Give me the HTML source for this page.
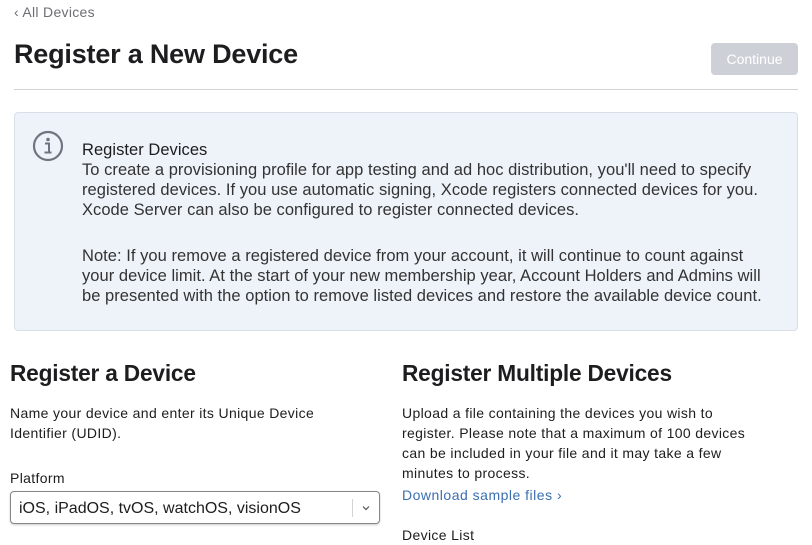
<!DOCTYPE html>
<html><head><meta charset="utf-8"><style>
*{margin:0;padding:0;box-sizing:border-box}
body{width:812px;height:545px;overflow:hidden;background:#fff;font-family:"Liberation Sans",sans-serif;color:#1d1d1f;position:relative}
.a{position:absolute;white-space:nowrap}
.back{left:14px;top:4px;font-size:14px;color:#6e6e73;letter-spacing:0.3px}
h1{position:absolute;left:14px;top:39px;font-size:27px;font-weight:bold;letter-spacing:-0.2px}
.btn{position:absolute;left:711px;top:43px;width:87px;height:32px;background:#cdd1d7;border-radius:4px;color:#fff;font-size:14px;text-align:center;line-height:32px}
.hr{position:absolute;left:14px;top:89px;width:784px;height:1px;background:#d2d2d7}
.box{position:absolute;left:14px;top:112px;width:784px;height:219px;background:#eef3fa;border:1px solid #d9dfe8;border-radius:4px}
.info{position:absolute;left:82px;top:140px;font-size:16.5px;line-height:20px;letter-spacing:0.04px;color:#333;white-space:nowrap}
h2{position:absolute;font-size:22.7px;font-weight:bold;top:360px;letter-spacing:-0.2px}
.p{position:absolute;font-size:14px;line-height:20px;letter-spacing:0.35px;color:#1d1d1f;white-space:nowrap}
.sel{position:absolute;left:10px;top:491px;width:370px;height:33px;border:1px solid #86868b;border-radius:4px;box-shadow:0 1px 2px rgba(0,0,0,.2);font-size:16px;line-height:33px;padding-left:8px}
</style></head><body>
<div class="a back">‹ All Devices</div>
<h1>Register a New Device</h1>
<div class="btn">Continue</div>
<div class="hr"></div>
<div class="box"></div>
<svg class="a" style="left:32px;top:130px" width="32" height="32" viewBox="0 0 32 32"><circle cx="16" cy="16" r="14" fill="none" stroke="#6e7480" stroke-width="2.2"/><circle cx="16" cy="9.5" r="1.8" fill="#6e7480"/><path d="M13 13.5h4v9M12.5 22.5h7" fill="none" stroke="#6e7480" stroke-width="2"/></svg>
<div class="info"><div style="color:#1d1d1f">Register Devices</div>To create a provisioning profile for app testing and ad hoc distribution, you'll need to specify<br>registered devices. If you use automatic signing, Xcode registers connected devices for you.<br>Xcode Server can also be configured to register connected devices.<br><br><div style="margin-top:6px">Note: If you remove a registered device from your account, it will continue to count against<br>your device limit. At the start of your new membership year, Account Holders and Admins will<br>be presented with the option to remove listed devices and restore the available device count.</div></div>
<h2 style="left:10px">Register a Device</h2>
<h2 style="left:402px">Register Multiple Devices</h2>
<div class="p" style="left:10px;top:403px">Name your device and enter its Unique Device<br>Identifier (UDID).</div>
<div class="p" style="left:10px;top:468px">Platform</div>
<div class="sel">iOS, iPadOS, tvOS, watchOS, visionOS<span style="position:absolute;left:341px;top:7px;height:18px;width:1px;background:#d2d2d7"></span><svg style="position:absolute;left:351px;top:13px" width="8" height="6" viewBox="0 0 8 6"><path d="M1 1.5l3 3 3-3" fill="none" stroke="#555" stroke-width="1.2"/></svg></div>
<div class="p" style="left:402px;top:403px">Upload a file containing the devices you wish to<br>register. Please note that a maximum of 100 devices<br>can be included in your file and it may take a few<br>minutes to process.</div>
<div class="p" style="left:402px;top:485px;color:#3a6fb0;letter-spacing:0.5px">Download sample files ›</div>
<div class="p" style="left:402px;top:525px">Device List</div>
</body></html>
